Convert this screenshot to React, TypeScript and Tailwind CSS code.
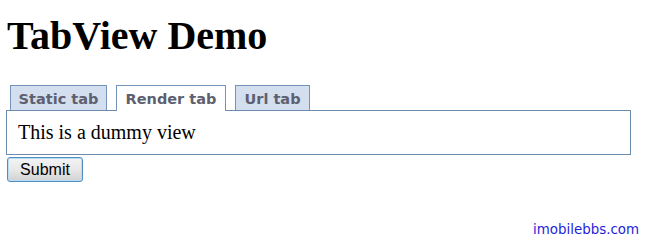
const tabs = [
  { label: "Static tab", width: "w-[97px]", active: false },
  { label: "Render tab", width: "w-[110px]", active: true },
  { label: "Url tab", width: "w-[75px]", active: false },
];

export default function App() {
  return (
    <div className="h-[240px] w-[646px] overflow-hidden bg-white px-[6px]">
      <h1 className="pl-px pt-[14px] font-['Liberation_Serif',serif] text-[40px] font-bold leading-[44px] text-black">
        TabView Demo
      </h1>

      {/* Tab strip */}
      <div className="mt-[27px]">
        <ul className="relative z-10 ml-[4px] flex gap-[9px]">
          {tabs.map((tab) => (
            <li
              key={tab.label}
              className={`${tab.width} h-[25px] border border-b-0 border-[#7393b8] pt-[2px] text-center font-['DejaVu_Sans',sans-serif] text-[14.5px] font-bold leading-[22px] text-[#5d6070] ${
                tab.active ? "mb-[-1px] h-[26px] bg-white" : "bg-[#d3deef]"
              }`}
            >
              {tab.label}
            </li>
          ))}
        </ul>
        <div className="w-[625px] border border-[#6d8bab] py-[10px] pl-[11px] font-['Liberation_Serif',serif] text-[20px] leading-[23px] text-black">
          This is a dummy view
        </div>
      </div>

      <button className="ml-px mt-[2px] h-[25px] w-[76px] rounded-[3px] border border-[#4f8fc4] bg-gradient-to-b from-[#f4f4f4] via-[#e8e8e8] to-[#d2d2d2] font-['Liberation_Sans',Arial,sans-serif] text-[16px] leading-[20px] text-black shadow-[inset_0_0_0_1px_#b9dcf3]">
        Submit
      </button>

      <div className="mt-[40px] pr-[1px] text-right font-['DejaVu_Sans',sans-serif] text-[13.4px] leading-[16px] text-[#1e1ed8]">
        imobilebbs.com
      </div>
    </div>
  );
}
